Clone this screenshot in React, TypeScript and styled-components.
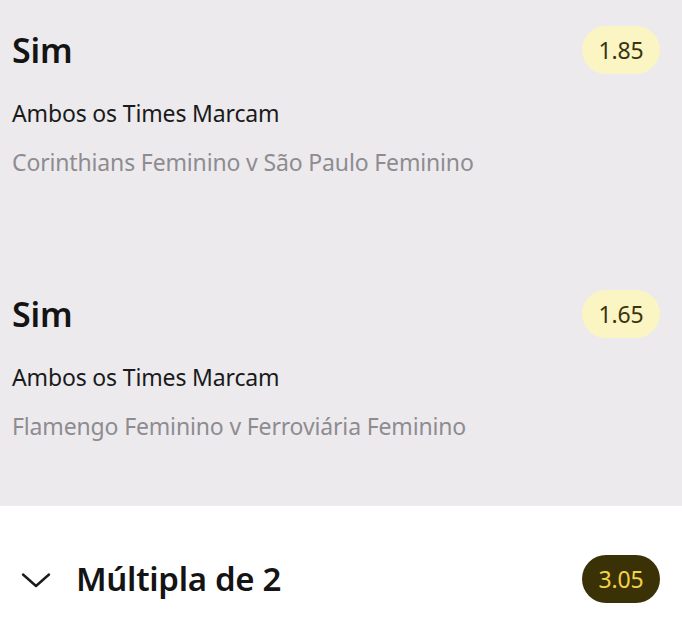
import React from 'react';
import styled, {createGlobalStyle} from 'styled-components';

const GlobalStyle = createGlobalStyle`
  html, body {
    margin: 0;
    padding: 0;
    background: #ffffff;
  }

  body {
    font-family: 'Noto Sans', 'Open Sans', sans-serif;
    -webkit-font-smoothing: antialiased;
  }
`;

interface ISelection {
  name: string;
  market: string;
  event: string;
  odds: string;
}

const selections: ISelection[] = [
  {name: 'Sim', market: 'Ambos os Times Marcam', event: 'Corinthians Feminino v São Paulo Feminino', odds: '1.85'},
  {name: 'Sim', market: 'Ambos os Times Marcam', event: 'Flamengo Feminino v Ferroviária Feminino', odds: '1.65'},
];

const Chevron = () => (
  <svg width="30" height="30" viewBox="0 0 30 30" fill="none">
    <path d="M2 10.5 L15 22 L28 10.5" stroke="#1a1a1a" strokeWidth="2.4" strokeLinecap="round" strokeLinejoin="round" />
  </svg>
);

const App = () => {
  return (
    <Page>
      <GlobalStyle />
      <SelectionList>
        {selections.map((item, index) => (
          <Selection key={index}>
            <TopRow>
              <Name>{item.name}</Name>
              <Odds variant="light">{item.odds}</Odds>
            </TopRow>
            <Market>{item.market}</Market>
            <EventName>{item.event}</EventName>
          </Selection>
        ))}
      </SelectionList>

      <Footer>
        <FooterTitle>
          <Chevron />
          <Title>Múltipla de 2</Title>
        </FooterTitle>
        <Odds variant="dark">3.05</Odds>
      </Footer>
    </Page>
  );
};

export default App;

const Page = styled.div`
  width: 682px;
  height: 630px;
  overflow: hidden;
  display: flex;
  flex-direction: column;
`;

const SelectionList = styled.section`
  background: #eceaed;
  display: flex;
  flex-direction: column;
  gap: 114px;
  padding: 26px 22px 66px 12px;
`;

const Selection = styled.article`
  display: flex;
  flex-direction: column;
`;

const TopRow = styled.div`
  display: flex;
  align-items: center;
  justify-content: space-between;
  height: 48px;
`;

const Name = styled.h3`
  margin: 0;
  font-size: 34px;
  font-weight: 600;
  color: #141414;
  letter-spacing: -0.2px;
`;

const Market = styled.p`
  margin: 24px 0 0;
  font-size: 23px;
  line-height: 30px;
  color: #1a1a1a;
  letter-spacing: -0.15px;
`;

const EventName = styled.p`
  margin: 20px 0 0;
  font-size: 23px;
  line-height: 28px;
  color: #8e8c90;
  letter-spacing: -0.15px;
`;

const Odds = styled.span<{variant: 'light' | 'dark'}>`
  display: inline-flex;
  align-items: center;
  justify-content: center;
  width: 78px;
  height: 48px;
  border-radius: 24px;
  font-size: 23px;
  letter-spacing: -0.1px;
  background: ${({variant}) => (variant === 'dark' ? '#3a3106' : '#faf5c2')};
  color: ${({variant}) => (variant === 'dark' ? '#f2d24a' : '#3a3410')};
`;

const Footer = styled.footer`
  flex: 1;
  background: #ffffff;
  display: flex;
  align-items: center;
  justify-content: space-between;
  padding: 21px 22px 0 21px;
`;

const FooterTitle = styled.div`
  display: flex;
  align-items: center;
  gap: 25px;
`;

const Title = styled.h2`
  margin: 0;
  font-size: 33px;
  font-weight: 600;
  color: #141414;
  letter-spacing: -0.3px;
`;
